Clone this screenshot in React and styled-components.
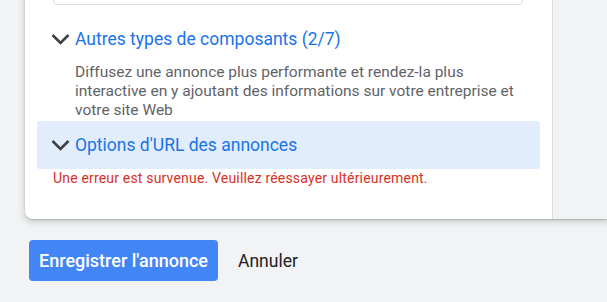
import React from "react";
import styled, { createGlobalStyle } from "styled-components";

const Global = createGlobalStyle`
  html, body { margin: 0; padding: 0; background: #f1f3f4; }
  body { font-family: Roboto, "Liberation Sans", Arial, sans-serif; overflow: hidden; }
  * { box-sizing: border-box; }
`;

const Page = styled.div`
  width: 607px;
  height: 302px;
  overflow: hidden;
  background: #f1f3f4;
`;

const Card = styled.div`
  display: flex;
  margin-left: 25px;
  margin-top: -35px;
  background: #fff;
  border-radius: 0 0 0 8px;
  box-shadow: 0 1px 2px rgba(60, 64, 67, 0.3), 0 2px 6px 2px rgba(60, 64, 67, 0.15);
`;

const Main = styled.div`
  width: 527px;
  padding-bottom: 33px;
  background: #fff;
  border-radius: 0 0 0 8px;
`;

const Divider = styled.div`
  width: 1px;
  background: #dadce0;
`;

const Side = styled.div`
  flex: 1;
  background: #f1f3f4;
`;

const InputBox = styled.div`
  margin-left: 28px;
  width: 470px;
  height: 40px;
  border: 1px solid #dadce0;
  border-radius: 4px;
`;

const SectionHeader = styled.div`
  display: flex;
  align-items: center;
  gap: 5px;
  height: 48px;
  margin: ${(p) => (p.$first ? "10px" : "1px")} 12px 0;
  padding: 0 14px;
  border-radius: 3px;
  background: ${(p) => (p.$active ? "#e1edfc" : "transparent")};
`;

const Title = styled.span`
  font-size: 17.5px;
  color: #1a73e8;
`;

const Description = styled.p`
  margin: 0;
  padding-left: 50px;
  width: 498px;
  font-size: 15.5px;
  line-height: 19px;
  color: #5f6368;
`;

const ErrorText = styled.div`
  margin: 1px 0 0 28px;
  font-size: 14px;
  letter-spacing: 0.18px;
  line-height: 16px;
  color: #d93025;
`;

const Actions = styled.div`
  display: flex;
  align-items: center;
  gap: 20px;
  padding: 21px 0 0 29px;
`;

const PrimaryButton = styled.button`
  width: 189px;
  height: 41px;
  border: none;
  border-radius: 4px;
  background: #4285f4;
  color: #fff;
  font-family: Roboto, "Liberation Sans", Arial, sans-serif;
  font-size: 18px;
  font-weight: 500;
  padding: 0;
`;

const TextButton = styled.button`
  border: none;
  background: none;
  padding: 0;
  color: #202124;
  font-family: Roboto, "Liberation Sans", Arial, sans-serif;
  font-size: 17.5px;
  font-weight: 400;
`;

const Chevron = () => (
  <svg width="19" height="13" viewBox="0 0 19 13" style={{ flex: "none" }}>
    <path d="M1.5 2 L9.5 10 L17.5 2" fill="none" stroke="#3c4043" strokeWidth="2.6" />
  </svg>
);

export default function App() {
  return (
    <Page>
      <Global />
      <Card>
        <Main>
          <InputBox />
          <SectionHeader $first>
            <Chevron />
            <Title>Autres types de composants (2/7)</Title>
          </SectionHeader>
          <Description>
            Diffusez une annonce plus performante et rendez-la plus interactive en y ajoutant des
            informations sur votre entreprise et votre site Web
          </Description>
          <SectionHeader $active>
            <Chevron />
            <Title>Options d'URL des annonces</Title>
          </SectionHeader>
          <ErrorText>Une erreur est survenue. Veuillez réessayer ultérieurement.</ErrorText>
        </Main>
        <Divider />
        <Side />
      </Card>
      <Actions>
        <PrimaryButton>Enregistrer l'annonce</PrimaryButton>
        <TextButton>Annuler</TextButton>
      </Actions>
    </Page>
  );
}
